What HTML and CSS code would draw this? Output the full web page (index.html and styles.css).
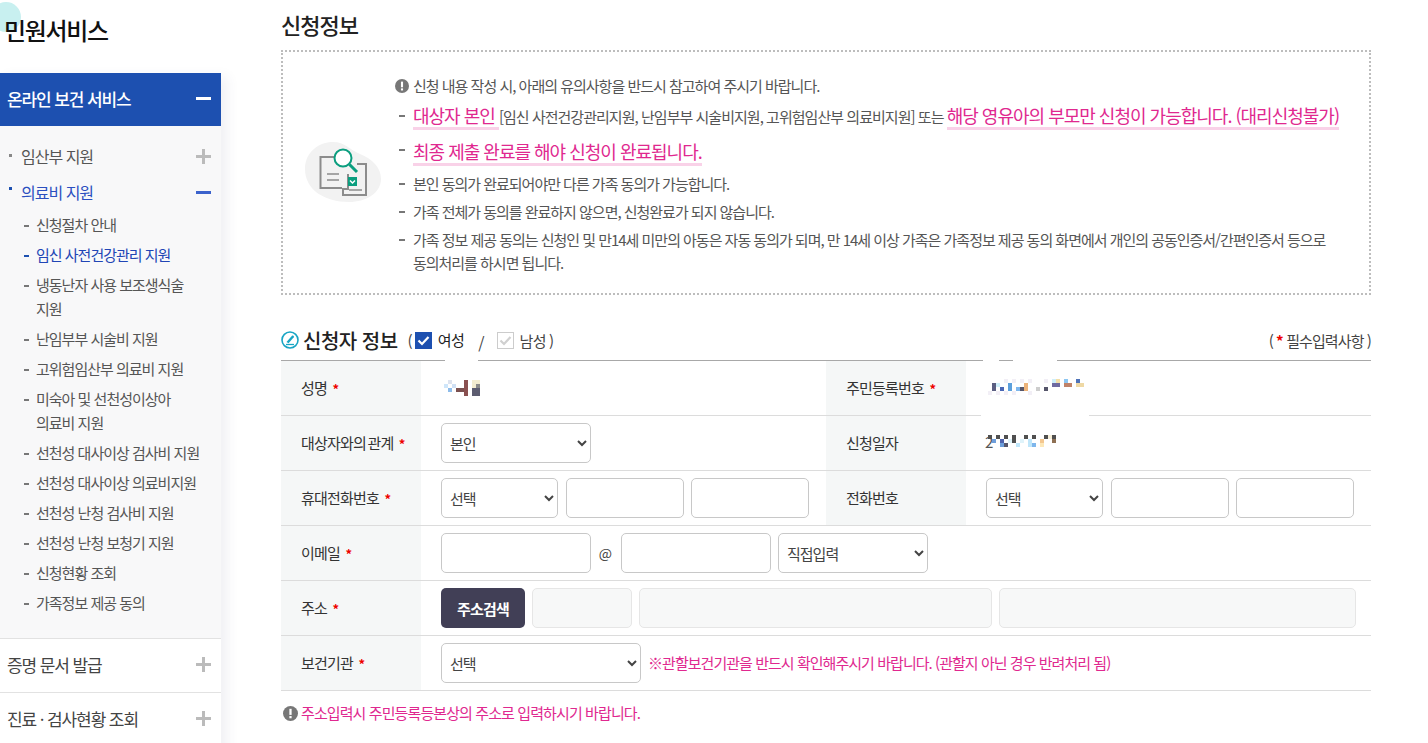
FILE: index.html
```html
<!DOCTYPE html>
<html lang="ko">
<head>
<meta charset="utf-8">
<title>민원서비스</title>
<link rel="stylesheet" href="styles.css">
</head>
<body>
<div class="page">
  <aside class="side">
    <span class="dot"></span>
    <h2 class="side-title">민원서비스</h2>
    <nav class="menu">
      <div class="menu-head"><span>온라인 보건 서비스</span><i class="sign minus white"></i></div>
      <div class="menu-body">
        <div class="lv2"><span class="sq"></span><span class="lv2-t">임산부 지원</span><i class="sign plus"></i></div>
        <div class="lv2 on"><span class="sq"></span><span class="lv2-t">의료비 지원</span><i class="sign minus blue"></i></div>
        <ul class="lv3">
          <li>신청절차 안내</li>
          <li class="on">임신 사전건강관리 지원</li>
          <li>냉동난자 사용 보조생식술<br>지원</li>
          <li>난임부부 시술비 지원</li>
          <li>고위험임산부 의료비 지원</li>
          <li>미숙아 및 선천성이상아<br>의료비 지원</li>
          <li>선천성 대사이상 검사비 지원</li>
          <li>선천성 대사이상 의료비지원</li>
          <li>선천성 난청 검사비 지원</li>
          <li>선천성 난청 보청기 지원</li>
          <li>신청현황 조회</li>
          <li>가족정보 제공 동의</li>
        </ul>
      </div>
      <div class="menu-item"><span>증명 문서 발급</span><i class="sign plus"></i></div>
      <div class="menu-item"><span>진료 · 검사현황 조회</span><i class="sign plus"></i></div>
    </nav>
  </aside>
  <main class="main">
    <h3 class="title">신청정보</h3>
    <section class="notice">
      <svg class="doc-ico" width="76" height="60" viewBox="0 0 76 60">
        <path d="M0 27C0 10 14 0 28 0c12 0 17 8 27 12 12 5 21 13 21 25 0 14-15 23-32 23C20 60 0 48 0 27Z" fill="#f2f2f2"/>
        <path d="M32 15H15.500v31H37" fill="none" stroke="#8c8c8c" stroke-width="2"/>
        <path d="M22 32h12M22 38h12" stroke="#8c8c8c" stroke-width="1.500"/>
        <path d="M52 22h9v31H38v-6h5V32" fill="none" stroke="#8c8c8c" stroke-width="2"/>
        <rect x="43" y="35" width="9" height="9" fill="#0b9e7f"/>
        <path d="M45 38.500l2.500 2.500 2.500-2.500" fill="none" stroke="#fff" stroke-width="1.500"/>
        <path d="M44 48h13" stroke="#8c8c8c" stroke-width="1.500"/>
        <circle cx="38" cy="16" r="8.500" fill="#fff" stroke="#0b9e7f" stroke-width="2"/>
        <path d="M44.500 22.500l7.500 7.500" stroke="#0b9e7f" stroke-width="3"/>
      </svg>
      <div class="notes">
        <p class="lead"><svg class="bang" width="14" height="14" viewBox="0 0 16 16"><circle cx="8" cy="8" r="8" fill="#777"/><rect x="6.800" y="3" width="2.400" height="6.500" fill="#fff"/><rect x="6.800" y="10.700" width="2.400" height="2.400" fill="#fff"/></svg>신청 내용 작성 시, 아래의 유의사항을 반드시 참고하여 주시기 바랍니다.</p>
        <ul class="nlist">
          <li class="n1"><em class="big">대상자 본인 </em><span class="sm">[임신 사전건강관리지원, 난임부부 시술비지원, 고위험임산부 의료비지원] 또는 </span><em class="big">해당 영유아의 부모만 신청이 가능합니다. (대리신청불가)</em></li>
          <li class="n2"><em class="big">최종 제출 완료를 해야 신청이 완료됩니다.</em></li>
          <li class="n3">본인 동의가 완료되어야만 다른 가족 동의가 가능합니다.</li>
          <li class="n3">가족 전체가 동의를 완료하지 않으면, 신청완료가 되지 않습니다.</li>
          <li class="n3">가족 정보 제공 동의는 신청인 및 만14세 미만의 아동은 자동 동의가 되며, 만 14세 이상 가족은 가족정보 제공 동의 화면에서 개인의 공동인증서/간편인증서 등으로 동의처리를 하시면 됩니다.</li>
        </ul>
      </div>
    </section>
    <div class="sec-head">
      <svg class="pen" width="18" height="18" viewBox="0 0 18 18"><circle cx="9" cy="9" r="8" fill="#fff" stroke="#18a5c4" stroke-width="1.600"/><path d="M5.500 11L11 4.800c1-.8 2.500.4 1.800 1.500L7.500 12.300Z" fill="#18a5c4"/><path d="M5 13.500h8" stroke="#18a5c4" stroke-width="1.300"/></svg>
      <h4 class="sec-title">신청자 정보</h4>
      <span class="paren">(</span>
      <span class="chk on"><svg width="17" height="17" viewBox="0 0 17 17"><path d="M3.500 8.500l3.500 3.500 6.500-7" fill="none" stroke="#fff" stroke-width="2.200"/></svg></span>
      <span class="g-l on-l">여성</span>
      <span class="slash">/</span>
      <span class="chk off"><svg width="15" height="15" viewBox="0 0 15 15"><path d="M2.500 7.500l3.500 3.500 6.500-7" fill="none" stroke="#d0d0d0" stroke-width="2.200"/></svg></span>
      <span class="g-l off-l">남성</span>
      <span class="paren p2">)</span>
      <span class="req-note">( <b>*</b> 필수입력사항 )</span>
    </div>
    <div class="tbl-wrap">
      <table class="tbl">
        <colgroup><col class="c-l"><col class="c-v"><col class="c-l"><col class="c-v2"></colgroup>
        <tr>
          <th>성명 <b>*</b></th>
          <td><svg class="mos" width="40" height="16" viewBox="0 0 40 16"><path d="M4 0h4v4H4z" fill="#dde3ef"/><path d="M28 0h8v4h-8zM28 4h4v4h-4z" fill="#f2ecd0"/><path d="M0 4h4v4H0z" fill="#cfe6fa"/><path d="M8 4h4v4H8z" fill="#cfe0f5"/><path d="M32 4h4v4h-4z" fill="#8a8a8a"/><path d="M4 8h4v4H4z" fill="#8ebcea"/><path d="M12 8h8v4h-8z" fill="#7a5050"/><path d="M20 0h4v16h-4z" fill="#8a5050"/><path d="M28 8h8v8h-8z" fill="#5c5c70"/></svg></td>
          <th>주민등록번호 <b>*</b></th>
          <td></td>
        </tr>
        <tr>
          <th>대상자와의 관계 <b>*</b></th>
          <td><select class="inp w150"><option>본인</option></select></td>
          <th>신청일자</th>
          <td></td>
        </tr>
        <tr>
          <th>휴대전화번호 <b>*</b></th>
          <td><div class="row"><select class="inp w117"><option>선택</option></select><input class="inp w118"><input class="inp w118"></div></td>
          <th>전화번호</th>
          <td><div class="row"><select class="inp w117"><option>선택</option></select><input class="inp w118"><input class="inp w118"></div></td>
        </tr>
        <tr>
          <th>이메일 <b>*</b></th>
          <td colspan="3"><div class="row mail"><input class="inp w150"><span class="at">@</span><input class="inp w150"><select class="inp w150"><option>직접입력</option></select></div></td>
        </tr>
        <tr>
          <th>주소 <b>*</b></th>
          <td colspan="3"><div class="row"><button class="btn">주소검색</button><input class="inp dis w100" disabled><input class="inp dis w353" disabled><input class="inp dis w357" disabled></div></td>
        </tr>
        <tr>
          <th>보건기관 <b>*</b></th>
          <td colspan="3"><div class="row"><select class="inp w200"><option>선택</option></select><span class="warn">※관할보건기관을 반드시 확인해주시기 바랍니다. (관할지 아닌 경우 반려처리 됨)</span></div></td>
        </tr>
      </table>
      <span class="patch p-a"></span>
      <span class="patch p-b"></span>
      <span class="patch p-c"></span>
      <span class="patch p-d"></span>
      <svg class="mos-a" width="100" height="16" viewBox="0 0 100 16">
        <path d="M20 0h4v4h-4zM28 0h4v4h-4zM36 0h4v4h-4zM44 0h4v4h-4zM60 0h4v4h-4zM4 12h4v4H4zM12 12h4v4h-4zM20 12h4v4h-4zM28 12h4v4h-4zM44 12h4v4h-4z" fill="#f2eff6"/>
        <path d="M8 4h4v8H8z" fill="#5b5f82"/><path d="M12 4h4v4h-4zM68 0h4v4h-4z" fill="#cfeffa"/><path d="M16 8h4v4h-4z" fill="#4a67b5"/><path d="M24 4h4v8h-4z" fill="#5c9fdc"/><path d="M32 8h4v4h-4z" fill="#7eb6ec"/><path d="M36 8h4v4h-4zM60 8h4v4h-4z" fill="#55556a"/><path d="M40 4h4v8h-4z" fill="#ecb27a"/><path d="M52 8h4v4h-4z" fill="#cdcdcd"/><path d="M68 4h8v4h-8z" fill="#6f6aa0"/><path d="M72 0h4v4h-4z" fill="#f4dfa8"/><path d="M80 0h4v4h-4z" fill="#8cc6f2"/><path d="M80 4h8v4h-8z" fill="#c08268"/><path d="M92 0h4v4h-4z" fill="#4f73b8"/><path d="M92 4h8v4h-8z" fill="#efd9a5"/>
      </svg>
      <svg class="mos-b" width="76" height="18" viewBox="0 0 76 18">
        <text class="mos-t" x="1" y="13">2</text>
        <path d="M4 0h4v4H4zM12 0h4v4h-4zM20 0h4v4h-4zM28 0h4v8h-4zM40 0h4v4h-4zM48 0h4v4h-4zM60 0h4v4h-4zM68 0h4v4h-4z" fill="#4f4f4f"/>
        <path d="M64 0h4v4h-4z" fill="#f7efd9"/><path d="M8 4h4v4H8zM16 8h4v4h-4z" fill="#6d9edb"/><path d="M16 4h4v4h-4z" fill="#4f63ad"/><path d="M24 4h4v4h-4zM36 4h4v4h-4z" fill="#dff3fa"/><path d="M44 4h4v8h-4zM32 8h4v4h-4z" fill="#bfe6fa"/><path d="M56 4h4v4h-4z" fill="#f4c78f"/><path d="M68 4h4v4h-4z" fill="#8e7053"/><path d="M20 8h4v4h-4z" fill="#55556a"/><path d="M48 8h4v4h-4z" fill="#7eb6ec"/><path d="M56 8h4v4h-4z" fill="#fde8b8"/>
      </svg>
    </div>
    <p class="foot-warn"><svg class="bang" width="15" height="15" viewBox="0 0 16 16"><circle cx="8" cy="8" r="8" fill="#777"/><rect x="6.800" y="3" width="2.400" height="6.500" fill="#fff"/><rect x="6.800" y="10.700" width="2.400" height="2.400" fill="#fff"/></svg>주소입력시 주민등록등본상의 주소로 입력하시기 바랍니다.</p>
  </main>
</div>
</body>
</html>
```

FILE: styles.css
```css
* { box-sizing: border-box; }
html, body { margin: 0; padding: 0; height: 743px; overflow: hidden; background: #fff; }
body { font-family: "Noto Sans CJK KR", "Noto Sans", sans-serif; color: #333; letter-spacing: -0.9px; }
.page { display: flex; align-items: flex-start; height: 743px; overflow: hidden; }
.side { position: relative; width: 221px; flex: none; padding-top: 12px; }
.dot { position: absolute; left: -9px; top: 2px; width: 30px; height: 30px; border-radius: 50%; background: #c8f0f0; }
.side-title { position: relative; margin: 0 0 39px 4px; font-size: 24px; line-height: 35px; height: 22px; font-weight: 500; color: #111; letter-spacing: -1.3px; }
.menu { box-shadow: 6px 4px 12px rgba(60, 70, 120, 0.08); background: #fff; height: 700px; }
.menu-head { height: 53px; background: #1d50b0; color: #fff; font-size: 17px; font-weight: 500; letter-spacing: -1.1px; display: flex; align-items: center; justify-content: space-between; padding: 0 10px 2px 7px; }
.menu-body { background: #f8f8f9; height: 513px; padding-top: 12px; border-bottom: 1px solid #e2e2e2; }
.lv2 { position: relative; height: 36px; display: flex; align-items: center; justify-content: space-between; padding: 0 10px 0 21px; font-size: 16px; letter-spacing: -1px; color: #555; }
.lv2 .sq { position: absolute; left: 9px; top: 16px; width: 3px; height: 3px; background: #888; }
.lv2.on { color: #2b4fc0; }
.lv2.on .sq { background: #1d50b0; top: 13px; }
.lv3 { list-style: none; margin: 0; padding: 0 0 0 36px; font-size: 15px; letter-spacing: -1px; line-height: 24px; color: #555; }
.lv3 li { position: relative; padding: 3px 0; }
.lv3 li::before { content: ""; position: absolute; left: -12px; top: 15px; width: 5px; height: 2px; background: #777; }
.lv3 li.on { color: #2145b5; }
.lv3 li.on::before { background: #1d50b0; }
.menu-item { height: 54px; display: flex; align-items: center; justify-content: space-between; padding: 0 10px 2px 7px; font-size: 17px; letter-spacing: -1.1px; color: #444; border-bottom: 1px solid #e2e2e2; }
.sign { position: relative; display: block; width: 15px; height: 15px; flex: none; }
.sign::before { content: ""; position: absolute; left: 0; right: 0; top: 6px; height: 3px; background: #bbb; }
.sign.plus::after { content: ""; position: absolute; top: 0; bottom: 0; left: 6px; width: 3px; background: #bbb; }
.sign.white::before { background: #fff; }
.sign.blue::before { background: #3b62cc; }
.main { width: 1090px; margin-left: 60px; flex: none; }
.title { margin: 0; height: 50px; padding-top: 10px; font-size: 22px; letter-spacing: -1px; line-height: 29px; font-weight: 500; color: #222; }
.notice { height: 245px; border: 2px dotted #bdbdbd; display: flex; align-items: flex-start; padding: 20px 0 0 22px; }
.doc-ico { flex: none; margin-top: 70px; }
.notes { margin-left: 13px; flex: 1; padding-right: 30px; }
.lead { margin: 0; padding-left: 1px; font-size: 15px; letter-spacing: -1px; line-height: 28px; color: #555; display: flex; align-items: center; }
.bang { flex: none; margin-right: 4px; }
.nlist { list-style: none; margin: 0; padding: 0 0 0 19px; font-size: 15px; color: #555; }
.nlist li { position: relative; }
.nlist li::before { content: ""; position: absolute; left: -14px; width: 6px; height: 2px; background: #777; }
.n1 { height: 36px; line-height: 30px; white-space: nowrap; }
.n1::before { top: 15px; }
.n2 { height: 36px; line-height: 30px; }
.n2::before { top: 13px; }
.n3 { line-height: 23px; margin-bottom: 5px; letter-spacing: -1.02px; }
.n3::before { top: 11px; }
.big { font-style: normal; font-size: 18px; letter-spacing: -1px; color: #e0288f; background: linear-gradient(#f9d2e8, #f9d2e8) left bottom / 100% 3px no-repeat; padding-bottom: 2px; }
.sm { font-size: 15px; letter-spacing: -0.97px; }
.sec-head { height: 45px; margin-top: 20px; display: flex; align-items: center; padding-top: 5px; font-size: 15px; color: #444; position: relative; }
.pen { flex: none; margin-right: 4px; }
.sec-title { margin: 0 10px 0 0; font-size: 20px; letter-spacing: -0.5px; font-weight: 500; color: #222; }
.chk { width: 17px; height: 17px; flex: none; display: block; margin-left: 3px; }
.chk.on { background: #1d50b0; }
.chk.off { border: 1px solid #ccc; margin-left: 0; }
.chk svg { display: block; }
.g-l { margin-left: 6px; letter-spacing: -0.6px; }
.on-l { color: #222; margin-top: -2px; }
.off-l { margin-left: 6px; }
.slash { margin: 5px 13px 0 14px; font-size: 16px; }
.p2 { margin-left: 3px; }
.req-note { margin-left: auto; font-size: 15px; letter-spacing: -0.9px; }
.req-note b { color: #e00; }
.tbl-wrap { position: relative; }
.tbl { width: 1090px; border-collapse: collapse; table-layout: fixed; border-top: 1px solid #a8a8a8; border-bottom: 1px solid #bbb; }
.c-l { width: 140px; } .c-v { width: 405px; } .c-v2 { width: 405px; }
.tbl tr { height: 55px; border-bottom: 1px solid #dcdcdc; }
.tbl th { background: #f5f7f7; text-align: left; font-weight: 400; font-size: 15px; letter-spacing: -0.8px; word-spacing: -2px; line-height: 20px; padding: 0 0 0 20px; color: #333; white-space: nowrap; }
.tbl th b { color: #e00; font-weight: 700; font-size: 13px; margin-left: 4px; }
.tbl td { padding: 0 0 0 20px; }
.row { display: flex; align-items: center; gap: 7px; }
.inp { height: 40px; border: 1px solid #c8c8c8; border-radius: 5px; background: #fff; padding: 0 4px; font: 15px "Noto Sans CJK KR", sans-serif; color: #444; letter-spacing: -1px; flex: none; }
.dis { background: #f7f8f8; border-color: #e6e6e6; }
.w100 { width: 100px; } .w117 { width: 117px; } .w118 { width: 118px; } .w150 { width: 150px; } .w200 { width: 200px; } .w353 { width: 353px; } .w357 { width: 357px; }
.row .w117 { margin-right: 1px; }
.mail .at { margin: 0 2px 0 0; font-size: 14px; color: #444; width: 14px; text-align: center; }
.btn { width: 84px; height: 40px; border: 0; border-radius: 5px; background: #413f56; color: #fff; font: 700 15px "Noto Sans CJK KR", sans-serif; letter-spacing: -0.8px; }
.warn { color: #e0288f; font-size: 15px; letter-spacing: -0.96px; padding-bottom: 2px; }
.patch { position: absolute; background: #fff; height: 2px; }
.p-a { left: 164px; top: -1px; width: 33px; }
.p-b { left: 702px; top: -1px; width: 16px; }
.p-c { left: 732px; top: -1px; width: 44px; }
.p-d { left: 700px; top: 54px; width: 108px; }
.mos { display: block; margin: -1px 0 0 3px; }
.mos-a { position: absolute; left: 703px; top: 19px; }
.mos-b { position: absolute; left: 703px; top: 75px; }
.mos-t { font-size: 15px; fill: #555; }
.foot-warn { margin: 12px 0 0 2px; font-size: 15px; letter-spacing: -0.9px; color: #e0288f; display: flex; align-items: center; line-height: 20px; }
.foot-warn .bang { margin-right: 3px; }
```
